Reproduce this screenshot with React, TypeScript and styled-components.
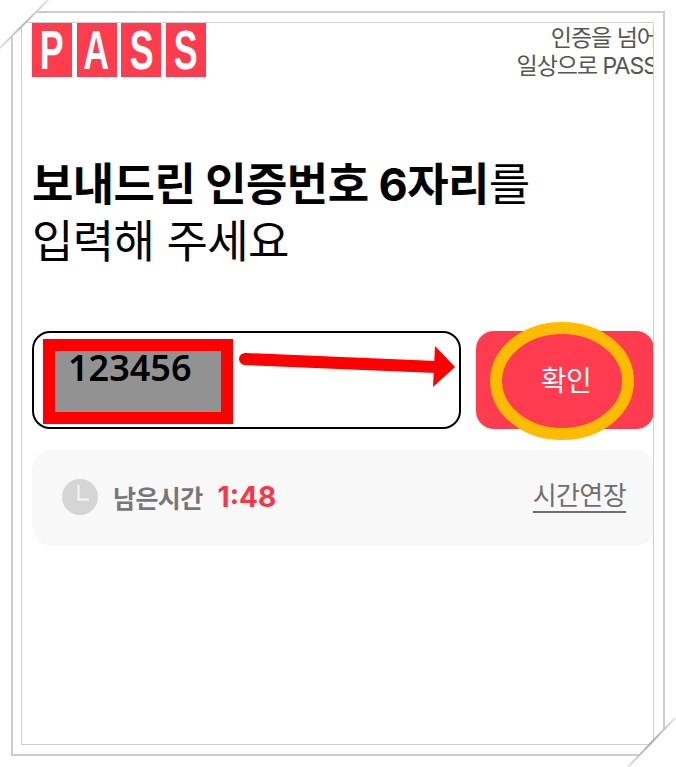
import React from "react";
import styled, { createGlobalStyle } from "styled-components";

const FONT = `Inter, "Noto Sans CJK KR", "Noto Sans", sans-serif`;

const GlobalStyle = createGlobalStyle`
  html, body {
    margin: 0;
    padding: 0;
    background: #ffffff;
  }
  * {
    box-sizing: border-box;
  }
`;

const Page = styled.div`
  position: relative;
  width: 676px;
  height: 767px;
  padding: 11px 0 0 11px;
  overflow: hidden;
  font-family: ${FONT};
`;

const OuterFrame = styled.div`
  width: 654px;
  height: 745px;
  padding: 9px 0 0 8px;
  border: 2px solid #cccccc;
`;

const InnerFrame = styled.div`
  position: relative;
  width: 633px;
  height: 723px;
  padding: 0 0 0 10px;
  border: 1px solid #cfcfcf;
  overflow: hidden;
`;

const Header = styled.header`
  display: flex;
  justify-content: space-between;
  align-items: flex-start;
`;

const Logo = styled.div`
  display: flex;
  gap: 4.67px;
  height: 54px;
`;

const LogoTile = styled.span`
  display: flex;
  align-items: center;
  justify-content: center;
  width: 40px;
  height: 54px;
  background: #ff3b4e;
  color: #ffffff;
  font-family: "Liberation Sans", sans-serif;
  font-weight: 700;
  font-size: 56px;
  line-height: 54px;
`;

const LogoLetter = styled.span`
  display: inline-block;
  transform: scaleX(0.64);
`;

const Tagline = styled.div`
  margin: 1px -4px 0 0;
  text-align: right;
  color: #555555;
  font-size: 23px;
  line-height: 28px;
  letter-spacing: -1px;
  white-space: nowrap;
`;

const Title = styled.h1`
  margin: 76px 0 0;
  color: #000000;
  font-size: 45px;
  font-weight: 400;
  line-height: 57px;
  letter-spacing: -0.6px;
`;

const TitleStrong = styled.strong`
  font-weight: 700;
`;

const InputRow = styled.div`
  display: flex;
  gap: 15px;
  width: 622px;
  height: 98px;
  margin-top: 61px;
`;

const CodeField = styled.div`
  display: flex;
  width: 429px;
  padding: 6px 0 3px 9px;
  border: 2px solid #000000;
  border-radius: 18px;
  background: #ffffff;
`;

const CodeMark = styled.div`
  width: 190px;
  height: 85px;
  padding: 0 0 0 13px;
  border: 12px solid #ff0000;
  background: #929292;
  color: #000000;
  font-family: "Noto Sans", sans-serif;
  font-size: 36px;
  font-weight: 600;
  line-height: 34px;
`;

const ConfirmButton = styled.button`
  flex: 0 0 178px;
  padding: 0 0 2px 2px;
  border: 0;
  border-radius: 18px;
  background: #ff3b50;
  color: #ffffff;
  font-family: ${FONT};
  font-size: 28px;
  font-weight: 400;
  letter-spacing: -0.5px;
`;

const TimerPanel = styled.div`
  display: flex;
  align-items: center;
  width: 622px;
  height: 96px;
  margin-top: 21px;
  padding: 0 28px 2px 30px;
  border-radius: 20px;
  background: #f8f8f8;
`;

const TimerLabel = styled.span`
  margin-left: 15px;
  color: #777777;
  font-size: 25px;
  font-weight: 700;
  letter-spacing: -0.6px;
`;

const TimerValue = styled.span`
  margin-left: 15px;
  color: #ff3346;
  font-size: 28px;
  font-weight: 700;
`;

const ExtendLink = styled.a`
  margin-left: auto;
  border-bottom: 2px solid #6e6e6e;
  color: #6e6e6e;
  font-size: 26px;
  line-height: 30px;
  letter-spacing: -0.6px;
`;

const Overlay = styled.svg`
  position: absolute;
  top: 0;
  left: 0;
  pointer-events: none;
`;

const ClockIcon = () => (
  <svg width="36" height="36" viewBox="0 0 36 36" aria-hidden="true">
    <circle cx="18" cy="18" r="18" fill="#d5d5d5" />
    <path d="M16.5 6v14.5h10.5" fill="none" stroke="#f0f0f0" strokeWidth="2.5" />
  </svg>
);

export default function App() {
  return (
    <Page>
      <GlobalStyle />
      <OuterFrame>
        <InnerFrame>
          <Header>
            <Logo>
              {"PASS".split("").map((letter, i) => (
                <LogoTile key={i}>
                  <LogoLetter>{letter}</LogoLetter>
                </LogoTile>
              ))}
            </Logo>
            <Tagline>
              인증을 넘어
              <br />
              일상으로 PASS
            </Tagline>
          </Header>
          <Title>
            <TitleStrong>보내드린 인증번호 6자리</TitleStrong>를
            <br />
            입력해 주세요
          </Title>
          <InputRow>
            <CodeField>
              <CodeMark>123456</CodeMark>
            </CodeField>
            <ConfirmButton>확인</ConfirmButton>
          </InputRow>
          <TimerPanel>
            <ClockIcon />
            <TimerLabel>남은시간</TimerLabel>
            <TimerValue>1:48</TimerValue>
            <ExtendLink>시간연장</ExtendLink>
          </TimerPanel>
        </InnerFrame>
      </OuterFrame>
      {/* annotations drawn over the screenshot */}
      <Overlay width="676" height="767" viewBox="0 0 676 767">
        <defs>
          <linearGradient id="foldA" gradientUnits="userSpaceOnUse" x1="48" y1="0" x2="0" y2="48">
            <stop offset="0" stopColor="#e4e4e4" />
            <stop offset="0.5" stopColor="#b8b8b8" />
            <stop offset="1" stopColor="#e4e4e4" />
          </linearGradient>
          <linearGradient id="foldB" gradientUnits="userSpaceOnUse" x1="675" y1="718" x2="628" y2="767">
            <stop offset="0" stopColor="#e4e4e4" />
            <stop offset="0.5" stopColor="#a8a8a8" />
            <stop offset="1" stopColor="#e4e4e4" />
          </linearGradient>
        </defs>
        <polygon points="0,0 48,0 0,48" fill="#ffffff" />
        <polygon points="676,717 676,767 627,767" fill="#ffffff" />
        <path d="M48 0 L0 48" stroke="url(#foldA)" strokeWidth="2" fill="none" />
        <path d="M675 718 L628 767" stroke="url(#foldB)" strokeWidth="2" fill="none" />
        <path d="M245 359 L436 367" stroke="#ff0000" strokeWidth="12" strokeLinecap="round" fill="none" />
        <polygon points="435,346 455,367 433,387" fill="#ff0000" />
        <ellipse cx="562" cy="381" rx="66" ry="53" fill="none" stroke="#ffbb00" strokeWidth="12" />
      </Overlay>
    </Page>
  );
}
